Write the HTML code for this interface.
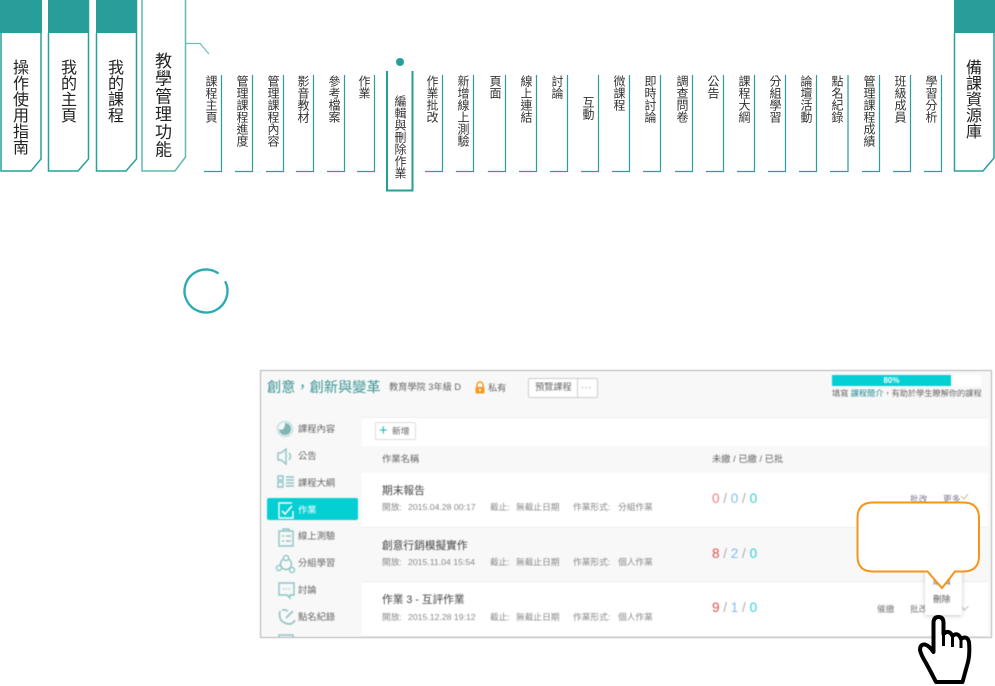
<!DOCTYPE html>
<html lang="zh-Hant">
<head>
<meta charset="utf-8">
<title>教學管理功能</title>
<style>
html,body{margin:0;padding:0;background:#fff;}
body{width:995px;height:686px;overflow:hidden;position:relative;font-family:"Liberation Sans","Noto Sans CJK TC",sans-serif;color:#333;}
.v{position:absolute;writing-mode:vertical-rl;text-orientation:upright;white-space:nowrap;}
.s{top:75px;font-size:12px;line-height:12px;width:12px;color:#333;}
.t{font-size:16px;line-height:16px;width:16px;color:#222;top:59px;}
svg{position:absolute;left:0;top:0;}
#shot{position:absolute;left:260px;top:370px;width:732px;height:268px;border:1px solid #b2b2b2;background:#f8f8f8;overflow:hidden;box-sizing:border-box;filter:blur(.5px);}
#shot div{position:absolute;white-space:nowrap;}
.m{font-size:9.3px;line-height:12px;color:#666;}
.g{font-size:8.7px;line-height:12px;color:#888;}
.h{font-size:10.7px;line-height:14px;color:#444;}
.n{font-size:13.500px;line-height:16px;color:#aaa;}
</style>
</head>
<body>
<svg width="995" height="686" viewBox="0 0 995 686" fill="none">
  <g fill="#279e9a">
    <rect x="0" y="0" width="42" height="33"/>
    <rect x="48" y="0" width="41" height="33"/>
    <rect x="96" y="0" width="41" height="33"/>
    <rect x="954" y="0" width="41" height="33"/>
  </g>
  <g stroke="#2a9f9b" stroke-width="1.500" fill="none">
    <path d="M1 33V171H31L41 159V0"/>
    <path d="M48.500 33V171H78L88.500 159V0"/>
    <path d="M96.500 33V171H126L136.500 159V0"/>
    <path d="M142 0V171H175L185.500 157V0" stroke="#5fb9b5"/>
    <path d="M954.500 33V171H983L994 158V33"/>
    <path d="M186 43.500H200L209 54" stroke="#6fc0bc" stroke-width="1.200"/>
  </g>
  <g stroke="#2a9f9b" stroke-width="1.200" fill="none">
    <path d="M204 171.500H221.500V75"/>
    <path d="M235 171.500H252.500V75"/>
    <path d="M266 171.500H283.500V75"/>
    <path d="M296 171.500H313.500V75"/>
    <path d="M327 171.500H344.500V75"/>
    <path d="M357 171.500H374.500V75"/>
    <path d="M425 171.500H442.500V75"/>
    <path d="M456 171.500H473.500V75"/>
    <path d="M488 171.500H505.500V75"/>
    <path d="M519 171.500H536.500V75"/>
    <path d="M550 171.500H567.500V75"/>
    <path d="M581 171.500H598.500V75"/>
    <path d="M612 171.500H629.500V75"/>
    <path d="M643 171.500H660.500V75"/>
    <path d="M675 171.500H692.500V75"/>
    <path d="M706 171.500H723.500V75"/>
    <path d="M737 171.500H754.500V75"/>
    <path d="M768 171.500H785.500V75"/>
    <path d="M799 171.500H816.500V75"/>
    <path d="M830 171.500H848V75"/>
    <path d="M862 171.500H879.500V75"/>
    <path d="M893 171.500H910.500V75"/>
    <path d="M924 171.500H941.500V75"/>
  </g>
  <path d="M387 71V190.500H412.500V71" stroke="#279e9a" stroke-width="2"/>
  <circle cx="400" cy="62" r="4" fill="#279e9a"/>
  <circle cx="206" cy="291" r="21.500" stroke="#2eacb2" stroke-width="2.400" stroke-dasharray="124.500 10.600" transform="rotate(-27 206 291)"/>
</svg>

<div class="v t" style="left:10px">操作使用指南</div>
<div class="v t" style="left:58px">我的主頁</div>
<div class="v t" style="left:105px">我的課程</div>
<div class="v t" style="left:152px;top:52px;font-size:17px;line-height:18px;width:18px;letter-spacing:.7px">教學管理功能</div>
<div class="v t" style="left:963px">備課資源庫</div>

<div class="v s" style="left:205px">課程主頁</div>
<div class="v s" style="left:236px">管理課程進度</div>
<div class="v s" style="left:267px">管理課程內容</div>
<div class="v s" style="left:297px">影音教材</div>
<div class="v s" style="left:328px">參考檔案</div>
<div class="v s" style="left:358px">作業</div>
<div class="v s" style="left:394px;top:95px">編輯與刪除作業</div>
<div class="v s" style="left:426px">作業批改</div>
<div class="v s" style="left:457px">新增線上測驗</div>
<div class="v s" style="left:489px">頁面</div>
<div class="v s" style="left:520px">線上連結</div>
<div class="v s" style="left:551px">討論</div>
<div class="v s" style="left:582px;top:96px">互動</div>
<div class="v s" style="left:613px">微課程</div>
<div class="v s" style="left:644px">即時討論</div>
<div class="v s" style="left:676px">調查問卷</div>
<div class="v s" style="left:707px">公告</div>
<div class="v s" style="left:738px">課程大綱</div>
<div class="v s" style="left:769px">分組學習</div>
<div class="v s" style="left:800px">論壇活動</div>
<div class="v s" style="left:831px">點名紀錄</div>
<div class="v s" style="left:863px">管理課程成績</div>
<div class="v s" style="left:894px">班級成員</div>
<div class="v s" style="left:925px">學習分析</div>

<div id="shot">
  <div style="left:6px;top:8px;font-size:14.200px;line-height:18px;color:#3a9494">創意，創新與變革</div>
  <div style="left:128px;top:10px;font-size:9.200px;line-height:13px;color:#666">教育學院 3年級 D</div>
  <svg style="left:213px;top:10px" width="12" height="13" viewBox="0 0 12 13" fill="none"><path d="M3 6V4a3 3 0 0 1 6 0v2" stroke="#f49a1f" stroke-width="1.500"/><rect x="1.500" y="6" width="9" height="6.500" rx="1" fill="#f49a1f"/><circle cx="6" cy="9" r="1.100" fill="#fff"/></svg>
  <div style="left:227px;top:11px;font-size:9.200px;line-height:13px;color:#666">私有</div>
  <div style="left:267px;top:7px;width:70px;height:20px;background:#fff;border:1px solid #ccc;border-radius:2px;box-sizing:border-box"></div>
  <div style="left:316px;top:7px;width:1px;height:20px;background:#ccc"></div>
  <div style="left:274px;top:10px;font-size:9.200px;line-height:13px;color:#666">預覽課程</div>
  <div style="left:320px;top:10px;font-size:9px;line-height:13px;color:#777;letter-spacing:.5px">···</div>

  <div style="left:571px;top:4px;width:149px;height:11px;background:#fff;border-radius:1px"></div>
  <div style="left:571px;top:4px;width:119px;height:11px;background:#04cfd2"></div>
  <div style="left:571px;top:4px;width:119px;height:11px;line-height:11px;text-align:center;font-size:8px;color:#fff;font-weight:bold">80%</div>
  <div style="left:571px;top:17px;font-size:8.200px;line-height:12px;color:#666">填寫 <span style="color:#1d8a8f">課程簡介</span>，有助於學生瞭解你的課程</div>

  <div style="left:101px;top:46px;width:626px;height:222px;background:#fff;border-top:1px solid #eee;"></div>
  <div style="left:114px;top:51px;width:41px;height:18px;background:#fff;border:1px solid #ddd;border-radius:2px;box-sizing:border-box"></div>
  <div style="left:118px;top:50px;font-size:15px;line-height:20px;color:#1fb5b8">+</div>
  <div style="left:131px;top:54px;font-size:8.800px;line-height:12px;color:#666">新增</div>

  <div style="left:101px;top:75px;width:626px;height:27px;background:#f8f8f8"></div>
  <div style="left:121px;top:82px;font-size:9.300px;line-height:13px;color:#666">作業名稱</div>
  <div style="left:451px;top:82px;font-size:9.300px;line-height:13px;color:#666">未繳 / 已繳 / 已批</div>

  <div style="left:101px;top:156px;width:626px;height:55px;background:#f8f8f8;border-top:1px solid #ececec;border-bottom:1px solid #ececec;box-sizing:border-box"></div>
  <div style="left:101px;top:265px;width:626px;height:1px;background:#ececec"></div>

  <div class="h" style="left:121px;top:113px">期末報告</div>
  <div class="g" style="left:121px;top:130px">開放:</div><div class="g" style="left:147px;top:130px">2015.04.28 00:17</div>
  <div class="g" style="left:229px;top:130px">截止:</div><div class="g" style="left:255px;top:130px">無截止日期</div>
  <div class="g" style="left:312px;top:130px">作業形式:</div><div class="g" style="left:357px;top:130px">分組作業</div>
  <div class="n" style="left:451px;top:120px"><span style="color:#ef7a7a">0</span> / <span style="color:#7fbcf3">0</span> / <span style="color:#35ccd1">0</span></div>

  <div class="h" style="left:121px;top:168px">創意行銷模擬實作</div>
  <div class="g" style="left:121px;top:185px">開放:</div><div class="g" style="left:147px;top:185px">2015.11.04 15:54</div>
  <div class="g" style="left:229px;top:185px">截止:</div><div class="g" style="left:255px;top:185px">無截止日期</div>
  <div class="g" style="left:312px;top:185px">作業形式:</div><div class="g" style="left:357px;top:185px">個人作業</div>
  <div class="n" style="left:451px;top:175px"><span style="color:#d9534f">8</span> / <span style="color:#7fbcf3">2</span> / <span style="color:#35ccd1">0</span></div>

  <div class="h" style="left:121px;top:222px">作業 3 - 互評作業</div>
  <div class="g" style="left:121px;top:240px">開放:</div><div class="g" style="left:147px;top:240px">2015.12.28 19:12</div>
  <div class="g" style="left:229px;top:240px">截止:</div><div class="g" style="left:255px;top:240px">無截止日期</div>
  <div class="g" style="left:312px;top:240px">作業形式:</div><div class="g" style="left:357px;top:240px">個人作業</div>
  <div class="n" style="left:451px;top:229px"><span style="color:#d9534f">9</span> / <span style="color:#7fbcf3">1</span> / <span style="color:#35ccd1">0</span></div>

  <div class="g" style="left:649px;top:122px;color:#777">批改</div>
  <div class="g" style="left:682px;top:122px;color:#777">更多</div>
  <div class="g" style="left:616px;top:232px;color:#777">催繳</div>
  <div class="g" style="left:649px;top:232px;color:#777">批改</div>
  <svg style="left:698px;top:122px" width="14" height="8" viewBox="0 0 14 8" fill="none"><path d="M2 3l3 3 4-5" stroke="#aaa" stroke-width=".8"/></svg>
  <svg style="left:698px;top:234px" width="14" height="8" viewBox="0 0 14 8" fill="none"><path d="M2 1l3.500 4 4-4" stroke="#aaa" stroke-width=".8"/></svg>

  <div style="left:664px;top:190px;width:37px;height:54px;background:#fff;box-shadow:0 1px 4px rgba(0,0,0,.22)"></div>
  <div class="g" style="left:672px;top:204px;color:#555">編輯</div>
  <div class="g" style="left:672px;top:222px;color:#555">刪除</div>

  <div style="left:6px;top:127px;width:91px;height:22px;background:#04cfd2;border-radius:2px"></div>
  <div class="m" style="left:37px;top:52px">課程內容</div>
  <div class="m" style="left:37px;top:79px">公告</div>
  <div class="m" style="left:37px;top:106px">課程大綱</div>
  <div class="m" style="left:37px;top:133px;color:#fff">作業</div>
  <div class="m" style="left:37px;top:159px">線上測驗</div>
  <div class="m" style="left:37px;top:186px">分組學習</div>
  <div class="m" style="left:37px;top:213px">討論</div>
  <div class="m" style="left:37px;top:240px">點名紀錄</div>

  <svg style="left:0;top:0" width="100" height="268" viewBox="0 0 100 268" fill="none" stroke="#8fc4c4" stroke-width="1.400">
    <circle cx="24" cy="58" r="7.500" stroke="#c5dede"/>
    <path d="M24 52a6 6 0 1 1-6 6c3 2 6 0 6-6z" fill="#7fb5b5" stroke="none"/>
    <path d="M17 82h3l5-4v15l-5-4h-3zM28 82q3 3.500 0 7"/>
    <path d="M17 105h5v4h-5zM17 111h5v5h-5zM25 106h8M25 109h8M25 112h8M25 115h8"/>
    <g stroke="#fff"><path d="M31 132h-13v15h14v-7"/><path d="M21 140l3 3 7-8" stroke-width="1.600"/></g>
    <path d="M18 160h14v15H18zM22 160v-2h6v2M21 165h2M25 165h5M21 170h2M25 170h5"/>
    <circle cx="25" cy="193" r="5.500"/><circle cx="18" cy="197" r="2.500" fill="#fff"/><circle cx="31" cy="199" r="2.500" fill="#fff"/><circle cx="25" cy="187" r="2.500" fill="#fff"/>
    <path d="M18 212h15v12h-4v3l-3-3H18z"/><path d="M22 218h1M25 218h1M28 218h1" stroke-width="1.500"/>
    <path d="M19 240q-2 9 5 12t10-3M25 247l7-7M27 240a8 8 0 0 0-6-1" stroke-width="1.600"/>
    <path d="M18 264h14v6H18z"/>
  </svg>
</div>

<svg width="995" height="686" viewBox="0 0 995 686" fill="none" style="z-index:5">
  <path d="M873 502.500H963Q979 502.500 979 518V556Q979 571.500 963 571.500H955L942 588L927.500 571.500H873Q857.500 571.500 857.500 556V518Q857.500 502.500 873 502.500Z" fill="#fff" stroke="#f5961a" stroke-width="2"/>
  <path d="M933.500 652V623Q933.500 617 938.500 617Q943.500 617 943.500 623V634Q949 629 952.500 636Q958 631.500 961 639Q967 635 969 642Q970 654 968 662L962.500 682H936Q931 672 926 663Q921 655 920 650Q920 644 925 644.500Q929.500 646 933.500 652Z" fill="#fff" stroke="#000" stroke-width="4" stroke-linejoin="round"/>
  <path d="M943.500 634V646M952.500 636V647M961 639V648" stroke="#000" stroke-width="3"/>
</svg>
</body>
</html>
